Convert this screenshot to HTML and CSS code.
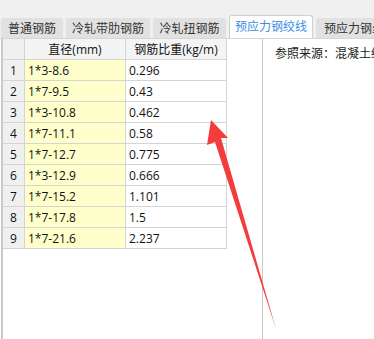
FILE: index.html
```html
<!DOCTYPE html>
<html lang="zh-CN">

<head>
    <meta charset="UTF-8">
    <title>钢筋比重</title>
    <link rel="stylesheet" href="styles.css">
</head>

<body>
    <div class="tabs">
        <div class="tab w4">普通钢筋</div>
        <div class="tab w6">冷轧带肋钢筋</div>
        <div class="tab w5">冷轧扭钢筋</div>
        <div class="tab w6 active">预应力钢绞线</div>
        <div class="tab last">预应力钢丝</div>
    </div>

    <div class="content">
        <div class="grid-panel">
            <table class="grid">
                <tr>
                    <th class="num"></th>
                    <th>直径(mm)</th>
                    <th>钢筋比重(kg/m)</th>
                </tr>
                <tr><td class="num">1</td><td class="key">1*3-8.6</td><td>0.296</td></tr>
                <tr><td class="num">2</td><td class="key">1*7-9.5</td><td>0.43</td></tr>
                <tr><td class="num">3</td><td class="key">1*3-10.8</td><td>0.462</td></tr>
                <tr><td class="num">4</td><td class="key">1*7-11.1</td><td>0.58</td></tr>
                <tr><td class="num">5</td><td class="key">1*7-12.7</td><td>0.775</td></tr>
                <tr><td class="num">6</td><td class="key">1*3-12.9</td><td>0.666</td></tr>
                <tr><td class="num">7</td><td class="key">1*7-15.2</td><td>1.101</td></tr>
                <tr><td class="num">8</td><td class="key">1*7-17.8</td><td>1.5</td></tr>
                <tr><td class="num">9</td><td class="key">1*7-21.6</td><td>2.237</td></tr>
            </table>
        </div>
        <div class="info-panel">
            <p class="source">参照来源：混凝土结构设计规范</p>
        </div>
    </div>

    <!-- annotation arrow drawn over the screenshot -->
    <svg class="arrow" width="374" height="339" viewBox="0 0 374 339">
        <polygon points="211,120 228,138 221,138 276,329 215,142 207,145" fill="#f43c3c" />
    </svg>
</body>

</html>
```

FILE: styles.css
```css
body {
    margin: 0;
    padding: 0;
    width: 374px;
    height: 339px;
    overflow: hidden;
    background: #f0f0f0;
    font-family: "Open Sans", "Noto Sans CJK SC", sans-serif;
    font-size: 12px;
    color: #111;
    position: relative;
}

.tabs {
    display: flex;
    align-items: flex-end;
    gap: 3px;
    padding: 15px 0 0 1px;
    height: 23px;
    white-space: nowrap;
    overflow: hidden;
}

.tab {
    flex-shrink: 0;
    box-sizing: border-box;
    height: 20px;
    line-height: 19px;
    text-align: center;
    background: #e1e1e1;
    border: 1px solid #e1e1e1;
    border-bottom: none;
    border-radius: 3px 3px 0 0;
    color: #333;
}

.tab.w4 {
    width: 62px;
}

.tab.w5 {
    width: 73px;
}

.tab.w6 {
    width: 84px;
}

.tab.last {
    padding: 0 7px;
}

.tab.active {
    height: 23px;
    line-height: 22px;
    background: #fff;
    border-color: #cfcfcf;
    color: #3b8de0;
    position: relative;
    z-index: 1;
}

.content {
    display: flex;
    height: 301px;
    border-top: 1px solid #d6d6d6;
    background: #fff;
}

.grid-panel {
    width: 259px;
    margin-left: 1px;
    border-left: 2px solid #cacaca;
    border-right: 1px solid #c8c8c8;
}

.grid {
    border-collapse: collapse;
    table-layout: fixed;
}

.grid th,
.grid td {
    height: 20px;
    padding: 0 3px;
    border: 1px solid #d4d4d4;
    font-weight: normal;
    white-space: nowrap;
}

.grid tr:first-child th {
    border-top: none;
}

.grid th {
    width: 94px;
    background: #f4f4f4;
    text-align: center;
}

.grid .num {
    width: 15px;
    background: #f0f0f0;
    text-align: center;
    border-left: none;
}

.grid .key {
    background: #ffffcc;
}

.info-panel {
    flex: 1;
    white-space: nowrap;
    overflow: hidden;
}

.source {
    margin: 5px 0 0 12px;
    color: #222;
}

.arrow {
    position: absolute;
    left: 0;
    top: 0;
}
```
